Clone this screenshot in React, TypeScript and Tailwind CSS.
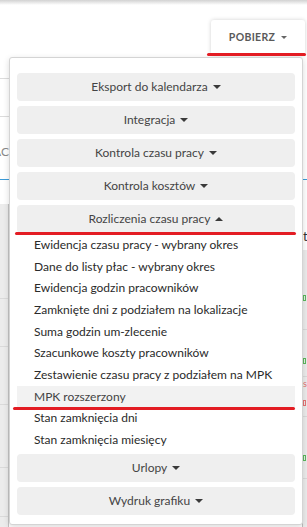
import React from "react";

const groupsTop = [
  "Eksport do kalendarza",
  "Integracja",
  "Kontrola czasu pracy",
  "Kontrola kosztów",
];

const reports = [
  "Ewidencja czasu pracy - wybrany okres",
  "Dane do listy płac - wybrany okres",
  "Ewidencja godzin pracowników",
  "Zamknięte dni z podziałem na lokalizacje",
  "Suma godzin um-zlecenie",
  "Szacunkowe koszty pracowników",
  "Zestawienie czasu pracy z podziałem na MPK",
  "MPK rozszerzony",
  "Stan zamknięcia dni",
  "Stan zamknięcia miesięcy",
];

function Caret({ up = false }: { up?: boolean }) {
  return (
    <span
      className={
        up
          ? "ml-[5px] inline-block h-0 w-0 border-x-[4px] border-b-[4px] border-x-transparent border-b-[#3a3a3a]"
          : "ml-[5px] inline-block h-0 w-0 border-x-[4px] border-t-[4px] border-x-transparent border-t-[#3a3a3a]"
      }
    />
  );
}

function GroupButton({ label, open = false }: { label: string; open?: boolean }) {
  return (
    <div className="flex h-[28px] items-center justify-center rounded-[4px] bg-[#efefef] text-[12px] text-[#444]">
      <span>{label}</span>
      <Caret up={open} />
    </div>
  );
}

export default function App() {
  return (
    <div className="relative h-[527px] w-[307px] overflow-hidden bg-white font-['Lato',sans-serif]">
      {/* top shadow */}
      <div className="h-[5px] bg-gradient-to-b from-[#d2d2d2] to-white" />

      {/* toolbar */}
      <div className="flex justify-end pr-[2px] pt-[15px]">
        <div className="flex h-[35px] w-[94px] items-center justify-center rounded-[3px] bg-white shadow-[0_0_4px_rgba(0,0,0,0.18)]">
          <span className="text-[10.5px] font-bold tracking-[0.3px] text-[#5a5a5a]">POBIERZ</span>
          <span className="ml-[6px] inline-block h-0 w-0 border-x-[3px] border-t-[3px] border-x-transparent border-t-[#666]" />
        </div>
      </div>

      {/* page behind the menu */}
      <div className="flex">
        <div className="flex w-[9px] flex-col">
          <div className="h-[24px] border-b border-[#dcdcdc]" />
          <div className="h-[38px] border-b border-[#dcdcdc]" />
          <div className="flex h-[63px] items-center justify-end overflow-hidden border-b border-[#3a9bd8] pt-[8px] text-[12px] text-[#888]">
            <span className="whitespace-nowrap">AC</span>
          </div>
          <div className="h-[24px]" />
          <div className="flex h-[330px] flex-col border-r border-[#c4c4c4] bg-[#ececec]">
            <div className="h-[95px] border-b border-[#dadada]" />
            <div className="h-[48px] border-b border-[#dadada]" />
            <div className="h-[58px] border-b border-[#dadada]" />
            <div className="h-[63px] border-b border-[#dadada]" />
            <div className="h-[49px] border-b border-[#dadada]" />
          </div>
        </div>
        <div className="flex-1" />
        <div className="flex w-[5px] flex-col">
          <div className="h-[125px] border-b border-[#3a9bd8]" />
          <div className="flex h-[70px] items-end overflow-hidden pb-[4px] text-[13px] text-[#333]">
            <span className="pl-[1px]">t</span>
          </div>
          <div className="flex h-[300px] flex-col border-l border-[#bdbdbd] bg-[#ececec]">
            <div className="h-[45px]" />
            <div className="h-[6px] w-[3px] border border-[#5cb85c]" />
            <div className="h-[29px] border-b border-[#dadada]" />
            <div className="h-[28px]" />
            <div className="h-[6px] w-[3px] border border-[#5cb85c]" />
            <div className="h-[13px] border-b border-[#dadada]" />
            <div className="h-[14px] text-[9px] leading-[14px] text-[#e57373]">s</div>
            <div className="h-[9px]" />
            <div className="h-[6px] w-[3px] border border-[#e57373]" />
            <div className="h-[11px] border-b border-[#dadada]" />
            <div className="h-[38px]" />
            <div className="h-[6px] w-[3px] border border-[#5cb85c]" />
            <div className="h-[18px] border-b border-[#dadada]" />
          </div>
        </div>
      </div>

      {/* dropdown menu */}
      <div className="absolute left-[9px] top-[57px] w-[294px] rounded-[3px] border border-[#d4d4d4] bg-white px-[7px] pb-[9px] pt-[15px] shadow-[0_2px_6px_rgba(0,0,0,0.15)]">
        <div className="flex flex-col gap-[5px]">
          {groupsTop.map((g) => (
            <GroupButton key={g} label={g} />
          ))}
          <GroupButton label="Rozliczenia czasu pracy" open />
        </div>
        <ul className="mt-[1px] flex flex-col">
          {reports.map((r) => (
            <li
              key={r}
              className={
                r === "MPK rozszerzony"
                  ? "flex h-[21.7px] items-center bg-[#f2f2f2] pl-[17px] text-[12px] text-[#444]"
                  : "flex h-[21.7px] items-center pl-[17px] text-[12px] text-[#2a2a2a]"
              }
            >
              {r}
            </li>
          ))}
        </ul>
        <div className="mt-[3px] flex flex-col gap-[5px]">
          <GroupButton label="Urlopy" />
          <GroupButton label="Wydruk grafiku" />
        </div>
      </div>

      {/* red marker strokes */}
      <div className="absolute left-[207px] top-[53px] h-[3px] w-[99px] rounded-full bg-[#e31c23]" />
      <div className="absolute left-[15px] top-[232px] h-[3px] w-[281px] rounded-full bg-[#e31c23]" />
      <div className="absolute left-[13px] top-[407px] h-[3px] w-[282px] rounded-full bg-[#e31c23]" />
    </div>
  );
}
